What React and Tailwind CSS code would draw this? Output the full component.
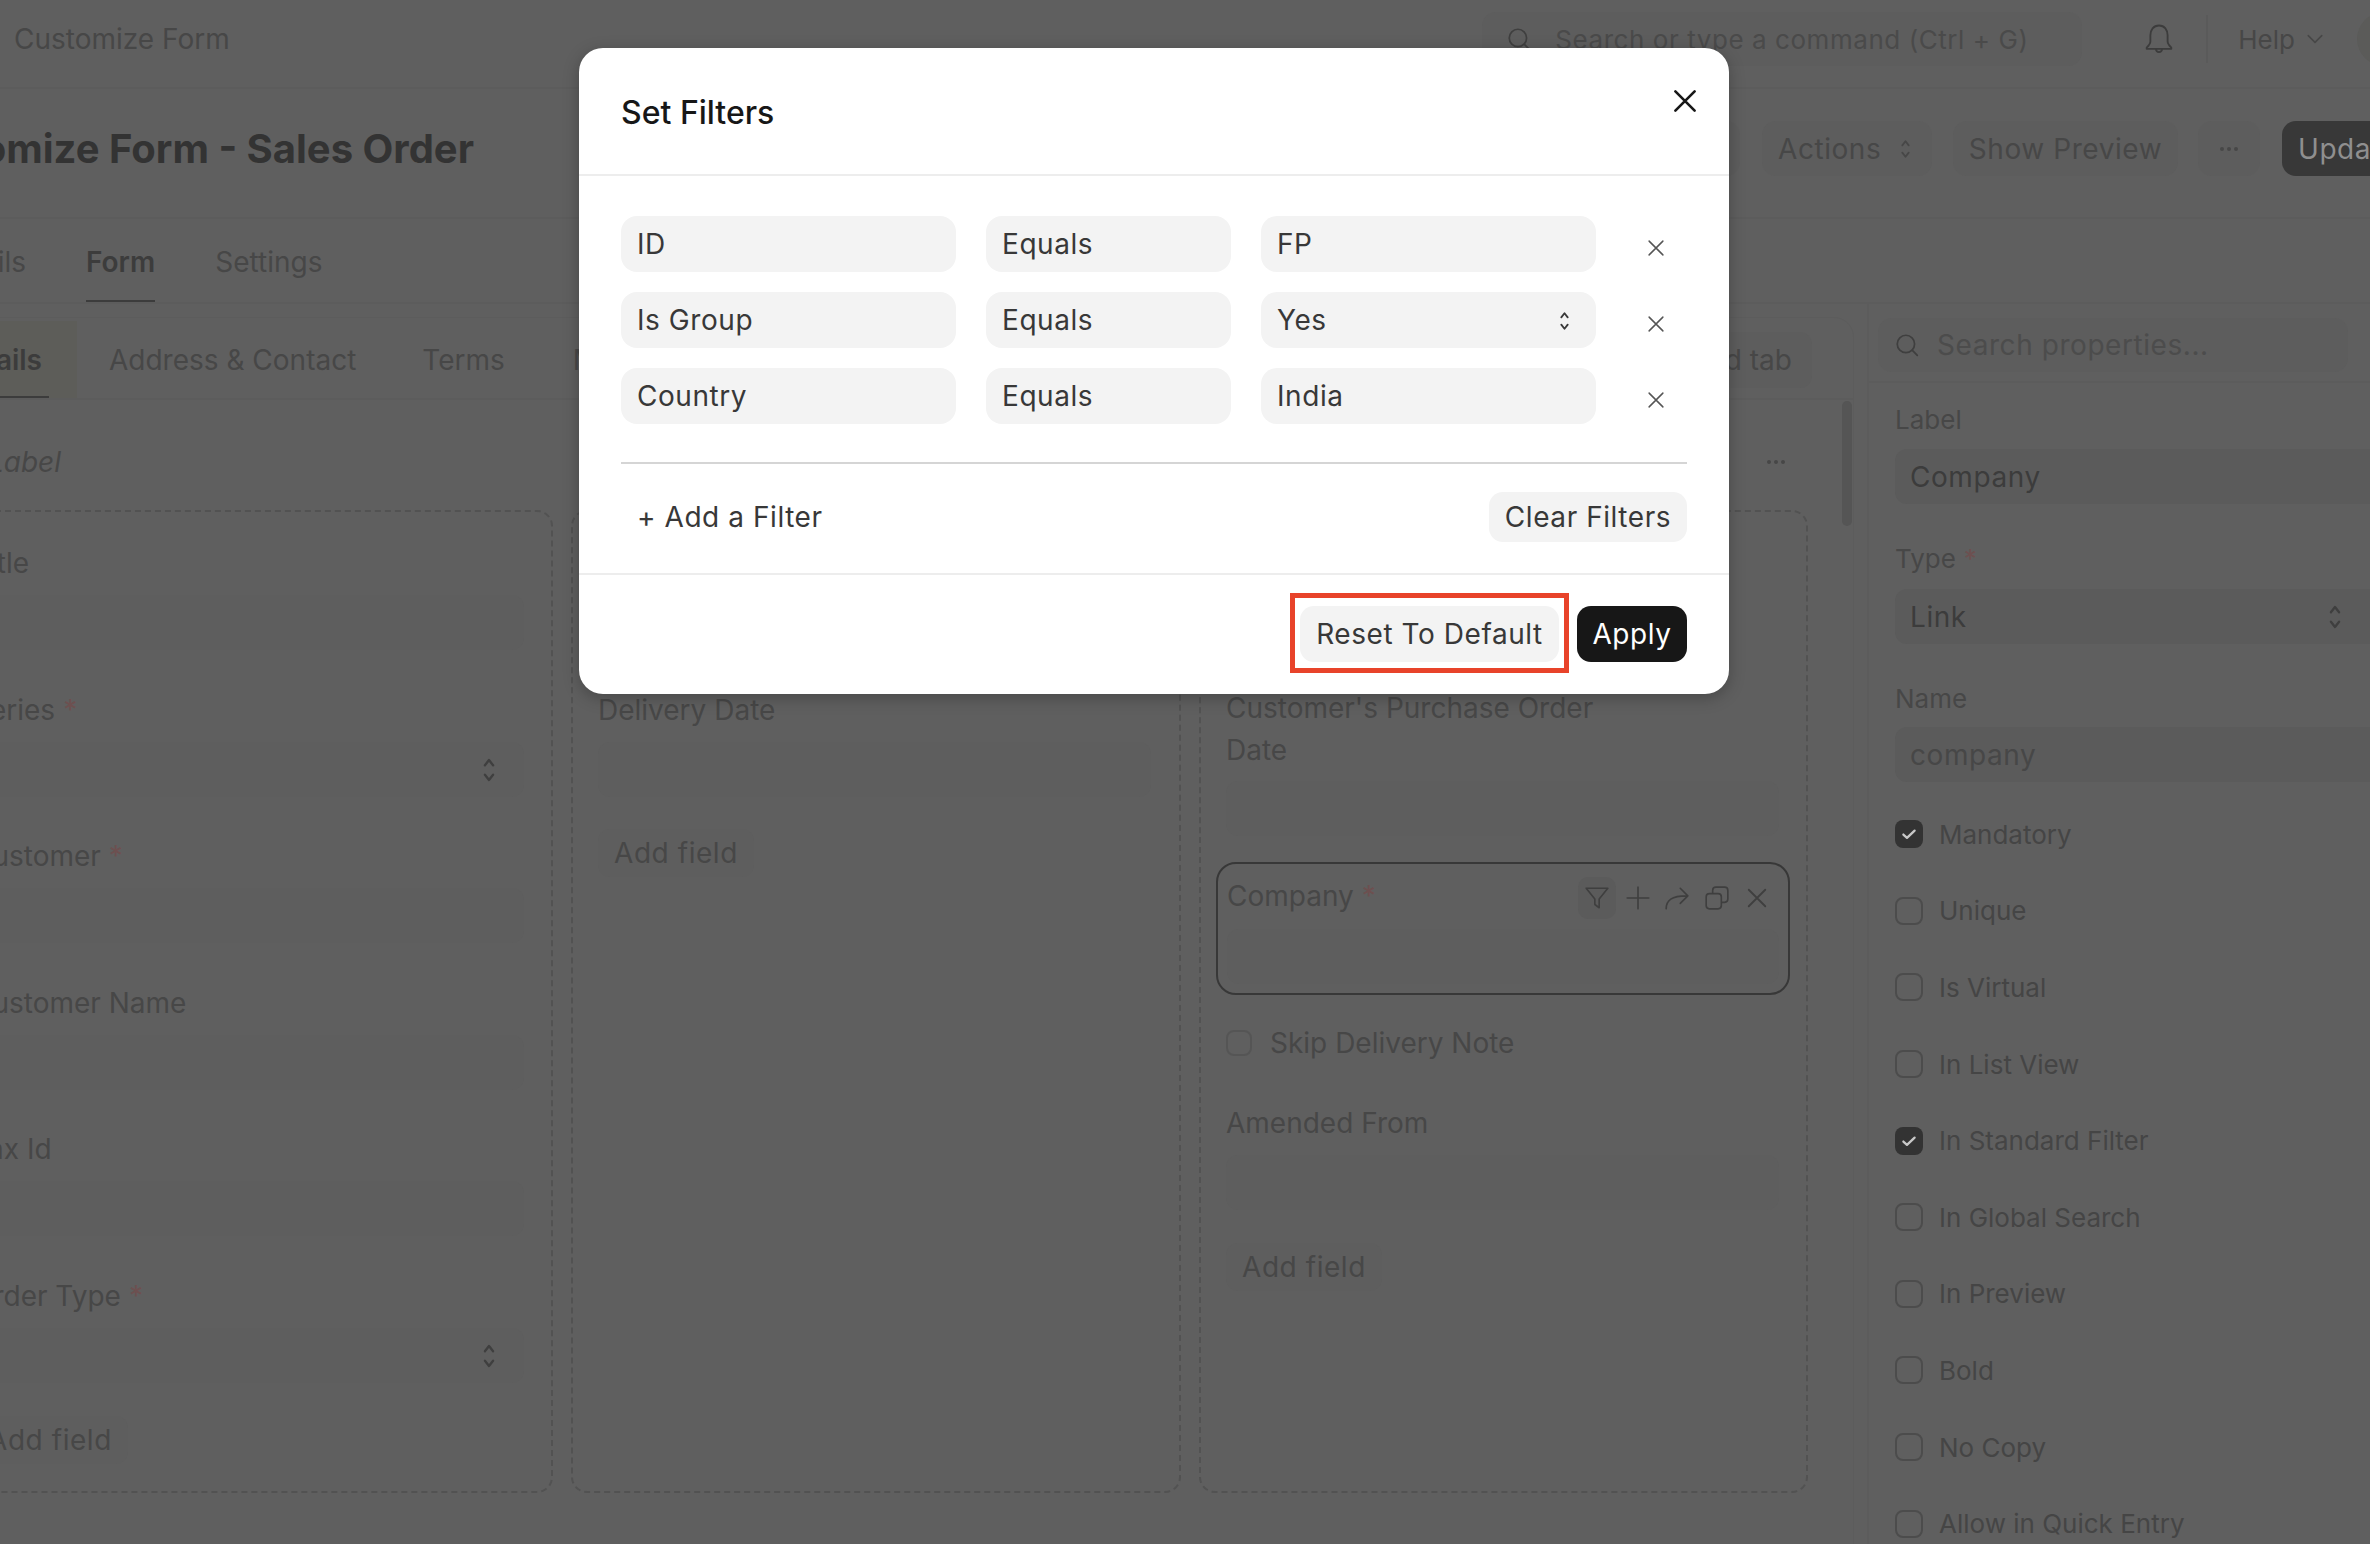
import React from 'react';

const XIcon = ({ className }) => (
  <svg className={className} viewBox="0 0 16 16" fill="none" stroke="currentColor" strokeWidth="1.2" strokeLinecap="round">
    <path d="M2.5 2.5l11 11M13.5 2.5l-11 11" />
  </svg>
);

const UpDown = ({ className }) => (
  <svg className={className} viewBox="0 0 12 24" fill="none" stroke="currentColor" strokeWidth="2" strokeLinecap="round" strokeLinejoin="round">
    <path d="M2.5 8L6 3.5 9.5 8M2.5 16L6 20.5 9.5 16" />
  </svg>
);

const Dots = () => (
  <div className="flex gap-[3px]">
    <i className="w-[4px] h-[4px] rounded-full bg-[#474747]" />
    <i className="w-[4px] h-[4px] rounded-full bg-[#474747]" />
    <i className="w-[4px] h-[4px] rounded-full bg-[#474747]" />
  </div>
);

const Field = ({ label, required, select, className = 'pb-[43.5px]' }) => (
  <div className={className}>
    <div className="h-[32px] mb-[16px] flex items-center text-[#474747] tracking-normal whitespace-nowrap">
      {label}
      {required && <span className="ml-[8px] text-[#6d5050]">*</span>}
    </div>
    <div className="h-[55px] rounded-[12px] bg-[#5e5e5e] flex items-center justify-end pr-[28px]">
      {select && <UpDown className="w-[14px] h-[30px] text-[#3f3f3f] mt-[2px]" />}
    </div>
  </div>
);

const AddField = () => (
  <div className="h-[48px] w-fit px-[16px] rounded-[12px] bg-[#5e5e5e] flex items-center text-[#474747]">Add field</div>
);

const FilterCell = ({ width, value, select }) => (
  <div className={`${width} h-[56px] rounded-[16px] bg-[#f3f3f3] flex items-center justify-between px-[16px] text-[#383838]`}>
    <span>{value}</span>
    {select && <UpDown className="w-[11px] h-[22px] text-[#383838] mr-[10px] mt-[2px]" />}
  </div>
);

const FilterRow = ({ field, value, select }) => (
  <div className="flex items-center">
    <FilterCell width="w-[335px]" value={field} />
    <div className="ml-[30px]"><FilterCell width="w-[245px]" value="Equals" /></div>
    <div className="ml-[30px]"><FilterCell width="w-[335px]" value={value} select={select} /></div>
    <XIcon className="ml-[50px] w-[20px] h-[20px] mt-[7px] text-[#555555]" />
  </div>
);

const Check = ({ label, checked }) => (
  <div className="h-[76.6px] flex items-center text-[26px] tracking-normal text-[#454545] whitespace-nowrap">
    {checked ? (
      <div className="w-[28px] h-[28px] rounded-[8px] bg-[#333333] flex items-center justify-center">
        <svg className="w-[18px] h-[18px]" viewBox="0 0 16 16" fill="none" stroke="#c8c8c8" strokeWidth="2" strokeLinecap="round" strokeLinejoin="round">
          <path d="M3 8.5l3.2 3L13 5" />
        </svg>
      </div>
    ) : (
      <div className="w-[28px] h-[28px] rounded-[8px] border-2 border-[#4c4c4c]" />
    )}
    <span className="ml-[16px]">{label}</span>
  </div>
);

const SideField = ({ label, value, required, select, muted, gap = 'mb-[14px]' }) => (
  <div className="mb-[38px]">
    <div className={`h-[32px] ${gap} flex items-center text-[26px] tracking-normal text-[#474747]`}>
      {label}
      {required && <span className="ml-[8px] text-[#6d5050]">*</span>}
    </div>
    <div className="w-[500px] h-[55px] rounded-[12px] bg-[#5b5b5b] flex items-center px-[15px]">
      <span className={muted ? 'text-[#474747]' : 'text-[#3c3c3c]'}>{value}</span>
      {select && <UpDown className="ml-auto mr-[38px] w-[14px] h-[30px] text-[#3f3f3f]" />}
    </div>
  </div>
);

export default function App() {
  return (
    <div className="relative w-[2370px] h-[1544px] overflow-hidden bg-[#5f5f5f] font-[Inter,sans-serif] text-[28px] tracking-[0.02em]">
      {/* navbar */}
      <div className="h-[89px] border-b-2 border-[#5c5c5c] flex items-center pb-[9px] pl-[14px] text-[#474747]">
        <span className="tracking-normal">Customize Form</span>
        <div className="ml-auto shrink-0 w-[600px] h-[54px] rounded-[14px] bg-[#5d5d5d] flex items-center pl-[24px]">
          <svg className="w-[26px] h-[26px]" viewBox="0 0 24 24" fill="none" stroke="#3f3f3f" strokeWidth="1.6" strokeLinecap="round">
            <circle cx="11" cy="11" r="8" />
            <path d="M17 17l4.5 4.5" />
          </svg>
          <span className="ml-[23px] text-[26px] text-[#4a4a4a] whitespace-nowrap">Search or type a command (Ctrl + G)</span>
        </div>
        <svg className="ml-[62px] shrink-0 w-[30px] h-[32px]" viewBox="0 0 24 26" fill="none" stroke="#3c3c3c" strokeWidth="1.5" strokeLinejoin="round">
          <path d="M12 2c-4.500 0-7 3.500-7 8v5c0 2-1.500 3.500-3 5v1h20v-1c-1.500-1.500-3-3-3-5v-5c0-4.500-2.500-8-7-8zM9.500 21c0 3.500 5 3.500 5 0" />
        </svg>
        <div className="ml-[32px] shrink-0 w-[2px] h-[48px] bg-[#5a5a5a]" />
        <span className="ml-[30px] shrink-0 text-[26px] tracking-normal text-[#474747]">Help</span>
        <svg className="ml-[11px] shrink-0 w-[18px] h-[18px]" viewBox="0 0 16 16" fill="none" stroke="#474747" strokeWidth="1.400" strokeLinecap="round" strokeLinejoin="round">
          <path d="M2 5l6 6 6-6" />
        </svg>
        <div className="ml-[33px] -mr-[41px] shrink-0 w-[54px] h-[54px] rounded-full bg-[#5b5b59]" />
      </div>

      {/* page head */}
      <div className="h-[130px] border-b-2 border-[#5c5c5c] flex items-center pb-[9px]">
        <div className="w-[474px] flex justify-end whitespace-nowrap text-[40px] font-bold tracking-normal text-[#333333]">
          Customize Form - Sales Order
        </div>
        <div className="ml-auto shrink-0 flex items-center text-[#474747]">
          <div className="w-[100px] h-[55px] rounded-[14px] bg-[#5d5d5d]" />
          <div className="ml-[22px] w-[170px] h-[55px] rounded-[14px] bg-[#5d5d5d] flex items-center pl-[16px]">
            Actions
            <UpDown className="ml-[19px] w-[11px] h-[24px] text-[#474747]" />
          </div>
          <div className="ml-[21px] w-[225px] h-[55px] rounded-[14px] bg-[#5d5d5d] flex items-center justify-center">Show Preview</div>
          <div className="ml-[20px] w-[62px] h-[55px] rounded-[14px] bg-[#5d5d5d] flex items-center justify-center">
            <Dots />
          </div>
          <div className="ml-[22px] w-[88px] h-[55px] rounded-l-[14px] bg-[#383838] pl-[16px] flex items-center overflow-hidden text-[#8f8f8f]">Update</div>
        </div>
      </div>

      {/* form tabs */}
      <div className="h-[85px] border-b-2 border-[#5c5c5c] flex items-center tracking-normal pt-[3px]">
        <div className="w-[26px] flex justify-end text-[#474747]">Details</div>
        <div className="relative ml-[60px] h-full flex items-center font-semibold text-[#3c3c3c]">
          Form
          <div className="absolute left-0 right-0 bottom-0 h-[2px] bg-[#3c3c3c]" />
        </div>
        <div className="ml-[60px] text-[#474747]">Settings</div>
      </div>

      <div className="flex">
        {/* form builder */}
        <div className="shrink-0 w-[1867px] pt-[13px] overflow-hidden">
          <div className="relative -ml-[64px] w-[1918px] h-[1240px] rounded-t-[20px] border border-[#5c5c5c]">
            <div className="h-[82px] border-b-2 border-[#5c5c5c] flex items-center pt-[3px] text-[#474747] tracking-normal whitespace-nowrap">
              <div className="relative w-[140px] h-full bg-[#5d5d59] flex items-center justify-end pr-[35px] font-semibold text-[#3c3c3c]">
                Details
                <div className="absolute left-0 right-[28px] bottom-0 h-[2px] bg-[#3c3c3c]" />
              </div>
              <span className="ml-[32px]">Address &amp; Contact</span>
              <span className="ml-[66px]">Terms</span>
              <span className="ml-[68px]">More Info</span>
              <div className="ml-auto mr-[41px] h-[56px] px-[20px] rounded-[12px] bg-[#5d5d5d] flex items-center">Add tab</div>
            </div>

            <div className="h-[110px] flex items-center pt-[13px] italic text-[#474747] tracking-normal whitespace-nowrap">
              <div className="w-[124px] flex justify-end">Section Label</div>
              <div className="ml-auto mr-[68px] not-italic"><Dots /></div>
            </div>

            <div className="flex gap-[18px] ml-[12px] h-[983px]">
              <div className="w-[604px] border-2 border-dashed border-[#525252] rounded-[16px] pt-[35px] pl-[21px] pr-[27px]">
                <Field label="Title" />
                <Field label="Series" required select />
                <Field label="Customer" required />
                <Field label="Customer Name" />
                <Field label="Tax Id" />
                <Field label="Order Type" required select className="pb-[33px]" />
                <AddField />
              </div>

              <div className="w-[610px] border-2 border-dashed border-[#525252] rounded-[16px] pt-[35px] pl-[25px] pr-[28px]">
                <Field label="Date" />
                <Field label="Delivery Date" className="pb-[32px]" />
                <AddField />
              </div>

              <div className="w-[609px] border-2 border-dashed border-[#525252] rounded-[16px] pt-[175px] pl-[25px] pr-[27px]">
                <div className="leading-[42px] mb-[10px] text-[#474747] tracking-normal">
                  Customer's Purchase Order
                  <br />
                  Date
                </div>
                <div className="h-[55px] rounded-[12px] bg-[#5e5e5e]" />

                <div className="relative mt-[26px] -ml-[10px] -mr-[11px] h-[133px] rounded-[20px] border-2 border-[#383838] px-[9px] pt-[16px]">
                  <div className="h-[32px] flex items-center text-[#474747] tracking-normal">
                    Company<span className="ml-[8px] text-[#6d5050]">*</span>
                  </div>
                  <div className="mt-[17px] h-[55px] rounded-[12px] bg-[#5e5e5e]" />
                  <div className="absolute right-[19px] top-[13px] flex items-center text-[#3f3f3f]">
                    <div className="w-[38px] h-[42px] rounded-[10px] bg-[#5b5b5b] flex items-center justify-center">
                      <svg className="w-[26px] h-[26px]" viewBox="0 0 24 24" fill="none" stroke="currentColor" strokeWidth="1.5" strokeLinejoin="round">
                        <path d="M2 3h20l-8 10v8l-4-3v-5z" />
                      </svg>
                    </div>
                    <svg className="ml-[9px] w-[26px] h-[26px]" viewBox="0 0 24 24" fill="none" stroke="currentColor" strokeWidth="1.500" strokeLinecap="round">
                      <path d="M12 2v20M2 12h20" />
                    </svg>
                    <svg className="ml-[13px] w-[26px] h-[26px]" viewBox="0 0 24 24" fill="none" stroke="currentColor" strokeWidth="1.5" strokeLinecap="round" strokeLinejoin="round">
                      <path d="M2 22c0-8 5-12 19-12M15 3l7 7-7 7" />
                    </svg>
                    <svg className="ml-[14px] w-[26px] h-[26px]" viewBox="0 0 24 24" fill="none" stroke="currentColor" strokeWidth="1.5" strokeLinejoin="round">
                      <rect x="2" y="8" width="14" height="14" rx="3" />
                      <path d="M8 8V5a3 3 0 0 1 3-3h8a3 3 0 0 1 3 3v8a3 3 0 0 1-3 3h-3" />
                    </svg>
                    <XIcon className="ml-[15px] w-[24px] h-[24px]" />
                  </div>
                </div>

                <div className="mt-[33px] flex items-center h-[30px] text-[#474747] tracking-normal">
                  <div className="w-[26px] h-[26px] rounded-[8px] border-2 border-[#555555]" />
                  <span className="ml-[18px]">Skip Delivery Note</span>
                </div>
                <div className="mt-[49px] h-[32px] flex items-center text-[#474747] tracking-normal">Amended From</div>
                <div className="mt-[16px] h-[55px] rounded-[12px] bg-[#5e5e5e]" />
                <div className="mt-[33px]"><AddField /></div>
              </div>
            </div>

            {/* scrollbar */}
            <div className="absolute left-[1905px] top-[83px] w-[10px] h-[125px] rounded-full bg-[#555555]" />
          </div>
        </div>

        {/* properties sidebar */}
        <aside className="w-[503px] shrink-0 border-l-2 border-[#5c5c5c] overflow-hidden">
          <div className="h-[79px] border-b-2 border-[#5c5c5c] pt-[14px] pl-[9px]">
            <div className="w-[470px] h-[54px] rounded-[14px] bg-[#5d5d5d] flex items-center pl-[16px]">
              <svg className="w-[26px] h-[26px]" viewBox="0 0 24 24" fill="none" stroke="#3f3f3f" strokeWidth="1.6" strokeLinecap="round">
                <circle cx="11" cy="11" r="8" />
                <path d="M17 17l4.500 4.500" />
              </svg>
              <span className="ml-[17px] text-[#4c4c4c]">Search properties...</span>
            </div>
          </div>
          <div className="pl-[26px] pt-[20px]">
            <SideField label="Label" value="Company" />
            <SideField label="Type" value="Link" required select gap="mb-[15px]" />
            <div className="-mb-[24px]"><SideField label="Name" value="company" muted gap="mb-[13px]" /></div>
            <Check label="Mandatory" checked />
            <Check label="Unique" />
            <Check label="Is Virtual" />
            <Check label="In List View" />
            <Check label="In Standard Filter" checked />
            <Check label="In Global Search" />
            <Check label="In Preview" />
            <Check label="Bold" />
            <Check label="No Copy" />
            <Check label="Allow in Quick Entry" />
          </div>
        </aside>
      </div>

      {/* set filters dialog */}
      <div className="absolute left-[579px] top-[48px] w-[1150px] h-[646px] rounded-[24px] bg-white shadow-[0_4px_16px_rgba(0,0,0,0.25)]">
        <div className="relative h-[128px] border-b-2 border-[#ededed] flex items-center pl-[42px] pt-[4px]">
          <span className="text-[32px] font-medium tracking-normal text-[#171717]">Set Filters</span>
          <XIcon className="absolute right-[30px] top-[39px] w-[28px] h-[28px] text-[#171717] stroke-[1.5]" />
        </div>
        <div className="px-[42px] pt-[40px]">
          <div className="flex flex-col gap-[20px]">
            <FilterRow field="ID" value="FP" />
            <FilterRow field="Is Group" value="Yes" select />
            <FilterRow field="Country" value="India" />
          </div>
          <div className="mt-[38px] border-t-2 border-[#d5d5d5]" />
          <div className="h-[109px] flex items-center justify-between pb-[3px]">
            <span className="pl-[16px] text-[#383838]">+ Add a Filter</span>
            <div className="w-[198px] h-[50px] rounded-[14px] bg-[#f3f3f3] flex items-center justify-center text-[#383838]">Clear Filters</div>
          </div>
        </div>
        <div className="border-t-2 border-[#ededed] pt-[31px] pr-[42px] flex justify-end gap-[18px]">
          <div className="relative w-[259px] h-[56px] rounded-[14px] bg-[#f3f3f3] flex items-center justify-center text-[#383838]">
            Reset To Default
            <div className="absolute -left-[10px] -right-[10px] -top-[13px] -bottom-[11px] border-[5px] border-[#e8432a]" />
          </div>
          <div className="w-[110px] h-[56px] rounded-[14px] bg-[#171717] flex items-center justify-center text-white">Apply</div>
        </div>
      </div>
    </div>
  );
}
